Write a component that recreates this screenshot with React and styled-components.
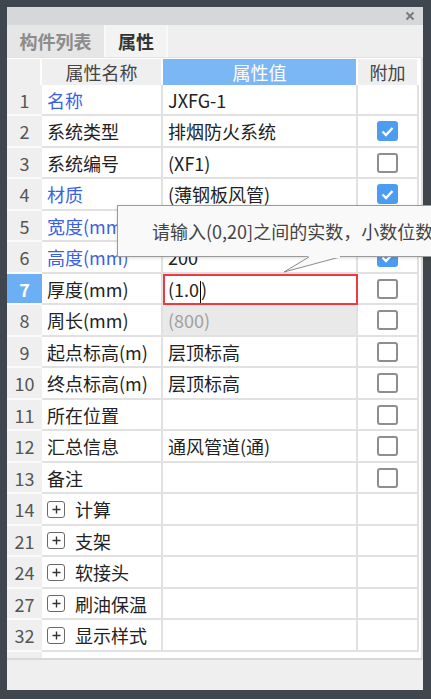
import React from "react";
import styled, { createGlobalStyle, css } from "styled-components";

const GlobalStyle = createGlobalStyle`
  html, body { margin: 0; padding: 0; overflow: hidden; }
  body { font-family: "Noto Sans CJK SC", "Noto Sans", sans-serif; }
  * { box-sizing: border-box; }
`;

const COLS = "35px 121px 195px 61px";
const LINE = "#e1e1e1";

const Frame = styled.div`
  position: relative;
  width: 431px;
  height: 699px;
  background: #40464d;
  padding: 7px 8px 9px 7px;
  overflow: hidden;
`;

const Panel = styled.div`
  display: flex;
  flex-direction: column;
  height: 100%;
  background: #efefef;
`;

const TitleBar = styled.div`
  height: 18px;
  background: #d5d7da;
  display: flex;
  align-items: center;
  justify-content: flex-end;
  padding-right: 8px;
`;

const TabBar = styled.div`
  height: 33px;
  display: flex;
  background: #efefef;
  border-bottom: 1px solid #e2e2e2;
`;

const Tab = styled.div`
  width: ${(p) => p.$w}px;
  display: flex;
  align-items: center;
  justify-content: center;
  font-size: 18px;
  font-weight: 700;
  border-right: 2px solid #f9f9f9;
  ${(p) =>
    p.$active
      ? css`
          background: #f3f3f3;
          color: #333;
        `
      : css`
          background: #e6e6e6;
          color: #8c8c8c;
        `}
`;

const GridWrap = styled.div`
  height: 602px;
  background: #fff;
  border-right: 2px solid #dedede;
  border-bottom: 2px solid #d8d8d8;
  display: flex;
  flex-direction: column;
  padding-top: 1px;
`;

const HeaderRow = styled.div`
  display: grid;
  grid-template-columns: ${COLS};
  height: 26px;
`;

const HeaderCell = styled.div`
  display: flex;
  align-items: center;
  justify-content: center;
  font-size: 18px;
  border-right: 2px solid #fff;
  background: ${(p) => (p.$blue ? "#7bb7f5" : "#efefef")};
  color: ${(p) => (p.$blue ? "#fff" : "#444")};
`;

const Row = styled.div`
  display: grid;
  grid-template-columns: ${COLS};
  height: 31px;
  &:nth-child(odd) {
    height: 32px;
  }
`;

const NumCell = styled.div`
  display: flex;
  align-items: center;
  justify-content: center;
  font-size: 18px;
  border-bottom: 2px solid #fafafa;
  ${(p) =>
    p.$active
      ? css`
          background: #6daff5;
          color: #fff;
          font-weight: 700;
        `
      : css`
          background: #efefef;
          color: #555;
        `}
`;

const Cell = styled.div`
  display: flex;
  align-items: center;
  gap: 10px;
  padding-left: 5px;
  font-size: 18px;
  white-space: nowrap;
  overflow: hidden;
  border-right: 2px solid ${LINE};
  border-bottom: 2px solid ${LINE};
  color: ${(p) => (p.$blue ? "#3b5fe4" : "#222")};
  ${(p) =>
    p.$disabled &&
    css`
      background: #e9e9e9;
      color: #a0a0a0;
    `}
  ${(p) =>
    p.$editing &&
    css`
      border: 2px solid #ec3a40;
      padding-left: 3px;
    `}
  ${(p) =>
    p.$center &&
    css`
      justify-content: center;
      padding-left: 0;
    `}
`;

const Caret = styled.span`
  display: inline-block;
  width: 1px;
  height: 22px;
  background: #000;
  vertical-align: middle;
  margin: 0 0.5px;
`;

const Filler = styled.div`
  flex: 1;
  display: grid;
  grid-template-columns: ${COLS};
`;

const FillerNum = styled.div`
  background: #efefef;
`;

const CheckBox = styled.div`
  width: 21px;
  height: 20px;
  border-radius: 3px;
  display: flex;
  align-items: center;
  justify-content: center;
  ${(p) =>
    p.$checked
      ? css`
          background: #4c9cf1;
        `
      : css`
          background: #fff;
          border: 2px solid #8e8e8e;
        `}
`;

const PlusBox = styled.div`
  width: 18px;
  height: 17px;
  border: 1.5px solid #6a6a6a;
  border-radius: 3px;
  display: flex;
  align-items: center;
  justify-content: center;
  flex-shrink: 0;
`;

const Tooltip = styled.div`
  position: absolute;
  left: 117px;
  top: 205px;
  width: 340px;
  height: 52px;
  background: #f9f9f9;
  border: 1px solid #9a9a9a;
  padding-left: 34px;
  display: flex;
  align-items: center;
  font-size: 18px;
  color: #444;
  white-space: nowrap;
  box-shadow: 0 1px 3px rgba(0, 0, 0, 0.15);
`;

const Tail = styled.svg`
  position: absolute;
  left: 165px;
  top: 50px;
`;

const Close = () => (
  <svg width="10" height="10" viewBox="0 0 10 10">
    <path d="M1.5 1.5 L8.5 8.5 M8.5 1.5 L1.5 8.5" stroke="#7a7a7a" strokeWidth="2" />
  </svg>
);

const Check = () => (
  <svg width="13" height="11" viewBox="0 0 13 11">
    <path d="M1.5 5.5 L5 9 L11.5 2" fill="none" stroke="#fff" strokeWidth="2.4" />
  </svg>
);

const Plus = () => (
  <svg width="9" height="9" viewBox="0 0 9 9">
    <path d="M4.5 0.5 V8.5 M0.5 4.5 H8.5" stroke="#333" strokeWidth="1.4" />
  </svg>
);

const rows = [
  { n: 1, name: "名称", blue: true, value: "JXFG-1", check: null },
  { n: 2, name: "系统类型", value: "排烟防火系统", check: true },
  { n: 3, name: "系统编号", value: "(XF1)", check: false },
  { n: 4, name: "材质", blue: true, value: "(薄钢板风管)", check: true },
  { n: 5, name: "宽度(mm)", blue: true, value: "", check: false },
  { n: 6, name: "高度(mm)", blue: true, value: "200", check: true },
  { n: 7, name: "厚度(mm)", value: "(1.0)", check: false, editing: true },
  { n: 8, name: "周长(mm)", value: "(800)", check: false, disabled: true },
  { n: 9, name: "起点标高(m)", value: "层顶标高", check: false },
  { n: 10, name: "终点标高(m)", value: "层顶标高", check: false },
  { n: 11, name: "所在位置", value: "", check: false },
  { n: 12, name: "汇总信息", value: "通风管道(通)", check: false },
  { n: 13, name: "备注", value: "", check: false },
  { n: 14, name: "计算", group: true },
  { n: 21, name: "支架", group: true },
  { n: 24, name: "软接头", group: true },
  { n: 27, name: "刷油保温", group: true },
  { n: 32, name: "显示样式", group: true },
];

export default function App() {
  return (
    <>
      <GlobalStyle />
      <Frame>
        <Panel>
          <TitleBar>
            <Close />
          </TitleBar>
          <TabBar>
            <Tab $w={99}>构件列表</Tab>
            <Tab $w={62} $active>
              属性
            </Tab>
          </TabBar>
          <GridWrap>
            <HeaderRow>
              <HeaderCell />
              <HeaderCell>属性名称</HeaderCell>
              <HeaderCell $blue>属性值</HeaderCell>
              <HeaderCell>附加</HeaderCell>
            </HeaderRow>
            {rows.map((r) => (
              <Row key={r.n}>
                <NumCell $active={r.editing}>{r.n}</NumCell>
                {r.group ? (
                  <Cell>
                    <PlusBox>
                      <Plus />
                    </PlusBox>
                    <span>{r.name}</span>
                  </Cell>
                ) : (
                  <Cell $blue={r.blue}>{r.name}</Cell>
                )}
                {r.editing ? (
                  <Cell $editing>
                    <span>
                      (1.0
                      <Caret />)
                    </span>
                  </Cell>
                ) : (
                  <Cell $disabled={r.disabled}>{r.value}</Cell>
                )}
                <Cell $center>
                  {r.check === null || r.check === undefined ? null : (
                    <CheckBox $checked={r.check}>{r.check ? <Check /> : null}</CheckBox>
                  )}
                </Cell>
              </Row>
            ))}
            <Filler>
              <FillerNum />
            </Filler>
          </GridWrap>
        </Panel>
        <Tooltip>
          请输入(0,20]之间的实数，小数位数
          <Tail width="60" height="18" viewBox="0 0 60 18">
            <polygon points="26,0 57,0 0,16" fill="#f9f9f9" />
            <path d="M26 1 L1 16 L57 1" fill="none" stroke="#8a8a8a" strokeWidth="1" />
            <rect x="26" y="0" width="31" height="2" fill="#f9f9f9" />
          </Tail>
        </Tooltip>
      </Frame>
    </>
  );
}
